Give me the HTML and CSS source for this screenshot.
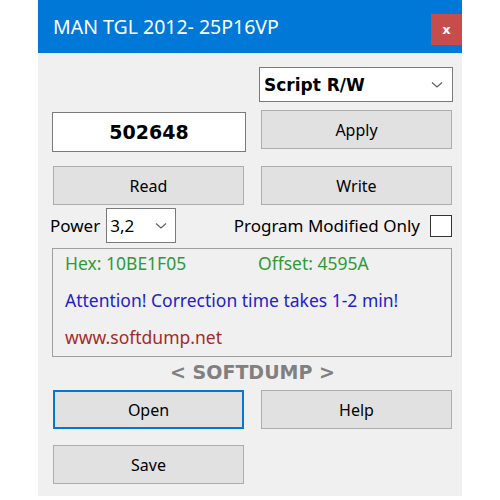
FILE: index.html
```html
<!DOCTYPE html>
<html lang="en">

<head>
  <meta charset="UTF-8">
  <meta name="viewport" content="width=device-width, initial-scale=1.0">
  <title>MAN TGL 2012- 25P16VP</title>
  <link rel="stylesheet" href="styles.css">
</head>

<body>
  <div class="window">
    <header class="titlebar">
      <span class="title">MAN TGL 2012- 25P16VP</span>
      <button class="close">x</button>
    </header>

    <section class="content">
      <div class="row row-mode">
        <div class="combo combo-mode">
          <span>Script R/W</span>
          <svg class="chev" width="12" height="8" viewBox="0 0 12 8"><path d="M1 1.5 L6 6 L11 1.5" fill="none" stroke="#606060" stroke-width="1.2"/></svg>
        </div>
      </div>

      <div class="row row-key">
        <input class="key" type="text" value="502648">
        <button class="btn btn-apply">Apply</button>
      </div>

      <div class="row row-rw">
        <button class="btn">Read</button>
        <button class="btn">Write</button>
      </div>

      <div class="row row-power">
        <label class="power">Power</label>
        <div class="combo combo-power">
          <span>3,2</span>
          <svg class="chev" width="12" height="8" viewBox="0 0 12 8"><path d="M1 1.5 L6 6 L11 1.5" fill="none" stroke="#606060" stroke-width="1.2"/></svg>
        </div>
        <label class="modified">Program Modified Only <span class="check"></span></label>
      </div>

      <div class="info">
        <div class="info-line green"><span class="hex">Hex: 10BE1F05</span><span>Offset: 4595A</span></div>
        <div class="info-line blue">Attention! Correction time takes 1-2 min!</div>
        <div class="info-line red">www.softdump.net</div>
      </div>

      <div class="brand">&lt; SOFTDUMP &gt;</div>

      <div class="row row-open">
        <button class="btn btn-focus">Open</button>
        <button class="btn">Help</button>
      </div>

      <div class="row row-save">
        <button class="btn">Save</button>
      </div>
    </section>
  </div>
</body>

</html>
```

FILE: styles.css
```css
* {
  box-sizing: border-box;
}

body {
  margin: 0;
  background: #fff;
  font-family: "Noto Sans", "Open Sans", sans-serif;
  font-size: 16px;
  color: #000;
}

.window {
  width: 424px;
  height: 496px;
  margin-left: 38px;
  background: #f0f0f0;
}

.titlebar {
  height: 53px;
  background: #0078d7;
  display: flex;
  align-items: flex-start;
  justify-content: space-between;
}

.title {
  color: #fff;
  font-size: 19.5px;
  margin: 13px 0 0 15px;
}

.close {
  width: 31px;
  height: 31px;
  margin-top: 14px;
  border: none;
  background: #c74d4d;
  color: #fff;
  font: bold 13px "DejaVu Sans", sans-serif;
  padding: 0;
}

.content {
  padding: 14px 10px 0 15px;
}

.row {
  display: flex;
  justify-content: space-between;
  align-items: flex-start;
}

.row-mode {
  justify-content: flex-end;
  margin-right: -1px;
}

.combo {
  background: #fff;
  border: 1px solid #7a7a7a;
  display: flex;
  align-items: center;
  justify-content: space-between;
}

.combo-mode {
  width: 194px;
  height: 35px;
  padding: 0 9px 0 4px;
  font: bold 17px "DejaVu Sans", sans-serif;
}

.row-key {
  margin-top: 8px;
}

.key {
  width: 194px;
  height: 40px;
  margin: 2px 0 0 -1px;
  border: 1px solid #7a7a7a;
  background: #fff;
  text-align: center;
  font: bold 19px "DejaVu Sans", sans-serif;
  color: #000;
  outline: none;
}

.btn {
  width: 191px;
  height: 39px;
  background: #e1e1e1;
  border: 1px solid #adadad;
  font-family: "Noto Sans", "Open Sans", sans-serif;
  font-size: 16px;
  color: #000;
  padding: 0;
}

.row-rw {
  margin-top: 14px;
}

.row-power {
  margin-top: 3px;
  align-items: center;
  font-size: 17px;
}

.power {
  margin-left: -3px;
}

.combo-power {
  width: 70px;
  height: 35px;
  margin-left: 6px;
  padding: 0 8px 0 3px;
}

.modified {
  margin-left: auto;
  display: flex;
  align-items: center;
  gap: 10px;
}

.check {
  width: 22px;
  height: 22px;
  border: 1px solid #333;
  background: #fff;
}

.info {
  margin: 5px 0 0 -1px;
  width: 400px;
  height: 109px;
  border: 1px solid #a0a0a0;
  padding: 0 12px;
  font-size: 17.5px;
}

.info-line {
  height: 37px;
  line-height: 28px;
}

.hex {
  display: inline-block;
  width: 193px;
}

.green {
  color: #2f9a3a;
}

.blue {
  color: #2222c8;
}

.red {
  color: #a52a2a;
}

.brand {
  text-align: center;
  font: bold 19px "DejaVu Sans", sans-serif;
  color: #808080;
  height: 33px;
  line-height: 30px;
}

.btn-focus {
  border: 2px solid #0078d7;
}

.row-save {
  margin-top: 16px;
}
```
